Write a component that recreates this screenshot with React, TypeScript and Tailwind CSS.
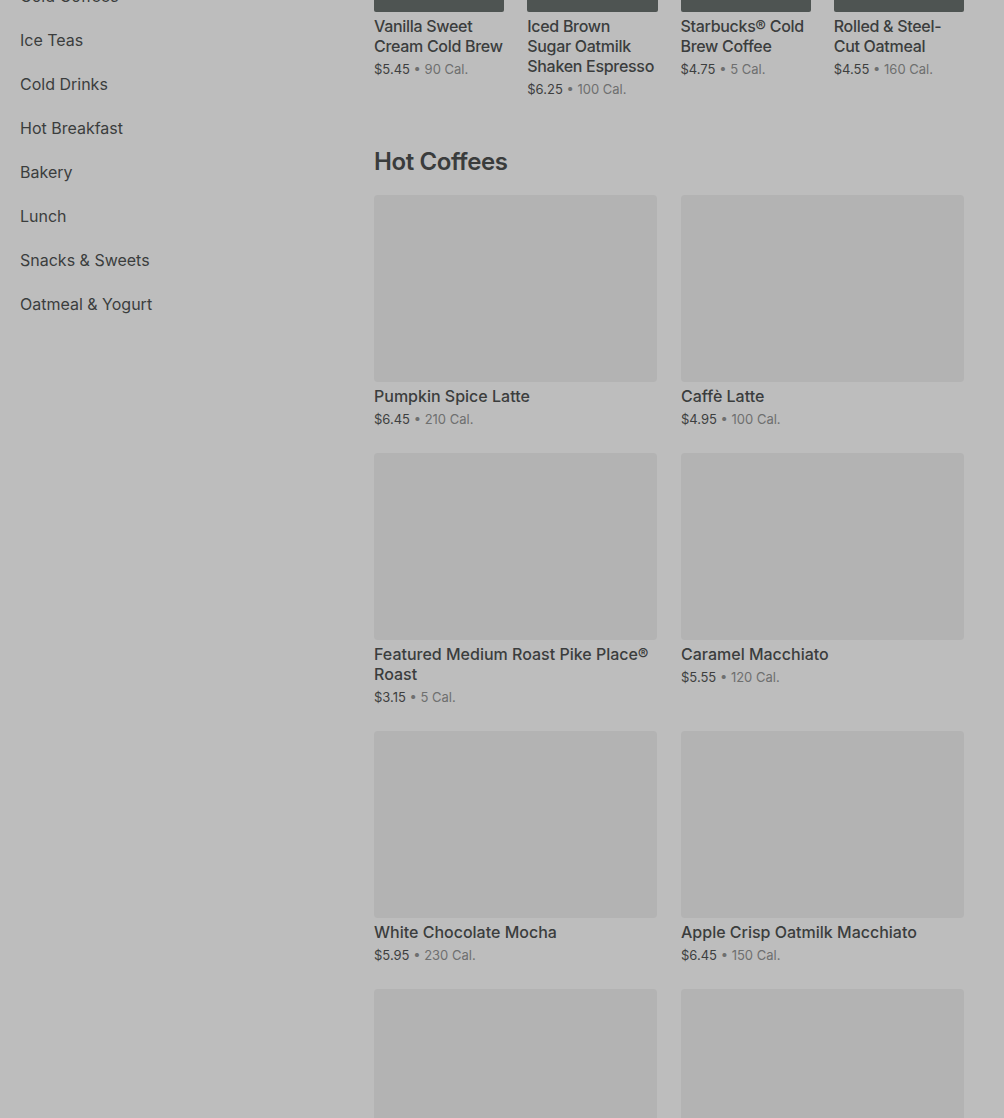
// Menu page under a dimmed overlay: sidebar categories + product grids.
const CATEGORIES = [
  "Cold Coffees",
  "Ice Teas",
  "Cold Drinks",
  "Hot Breakfast",
  "Bakery",
  "Lunch",
  "Snacks & Sweets",
  "Oatmeal & Yogurt",
];

type Item = { name: string; price: string; cal: string };

const FEATURED: Item[] = [
  { name: "Vanilla Sweet Cream Cold Brew", price: "$5.45", cal: "90 Cal." },
  { name: "Iced Brown Sugar Oatmilk Shaken Espresso", price: "$6.25", cal: "100 Cal." },
  { name: "Starbucks® Cold Brew Coffee", price: "$4.75", cal: "5 Cal." },
  { name: "Rolled & Steel-Cut Oatmeal", price: "$4.55", cal: "160 Cal." },
];

const HOT_COFFEES: Item[] = [
  { name: "Pumpkin Spice Latte", price: "$6.45", cal: "210 Cal." },
  { name: "Caffè Latte", price: "$4.95", cal: "100 Cal." },
  { name: "Featured Medium Roast Pike Place® Roast", price: "$3.15", cal: "5 Cal." },
  { name: "Caramel Macchiato", price: "$5.55", cal: "120 Cal." },
  { name: "White Chocolate Mocha", price: "$5.95", cal: "230 Cal." },
  { name: "Apple Crisp Oatmilk Macchiato", price: "$6.45", cal: "150 Cal." },
];

function Meta({ item }: { item: Item }) {
  return (
    <p className="mt-[3px] text-[13px] leading-5 text-[#3d3f3f]">
      {item.price}
      <span className="text-[#6e6f6f]"> • {item.cal}</span>
    </p>
  );
}

function FeaturedCard({ item }: { item: Item }) {
  return (
    <div>
      <div className="h-[130px] rounded-b-[2px] bg-[#4e5452]" />
      <p className="mt-1 text-base font-medium leading-5 tracking-[-0.3px] text-[#3b3d3d]">{item.name}</p>
      <Meta item={item} />
    </div>
  );
}

function ProductCard({ item }: { item: Item }) {
  return (
    <div>
      <div className="h-[187px] rounded-sm bg-[#b3b3b3]" />
      <p className="mt-1 text-base font-medium leading-5 text-[#3b3d3d]">{item.name}</p>
      <Meta item={item} />
    </div>
  );
}

export default function App() {
  return (
    <div
      className="h-[1118px] overflow-hidden bg-[#bdbdbd]"
      style={{ fontFamily: "Inter, 'Liberation Sans', sans-serif" }}
    >
      <div className="-mt-[120px] flex items-start">
        <nav className="w-[374px] shrink-0 pl-5 pt-[94px]">
          {CATEGORIES.map((c) => (
            <p key={c} className="py-[10px] text-base leading-6 text-[#3b3d3d]">
              {c}
            </p>
          ))}
        </nav>

        <main className="w-[590px] shrink-0 pt-[2px]">
          <div className="grid grid-cols-4 gap-x-[23px]">
            {FEATURED.map((it) => (
              <FeaturedCard key={it.name} item={it} />
            ))}
          </div>

          <h2 className="mt-[47px] mb-[17px] text-2xl font-semibold leading-8 tracking-[-0.4px] text-[#3a3c3c]">
            Hot Coffees
          </h2>

          <div className="grid grid-cols-2 gap-x-6 gap-y-6">
            {HOT_COFFEES.map((it) => (
              <ProductCard key={it.name} item={it} />
            ))}
            <div className="h-[187px] rounded-sm bg-[#b3b3b3]" />
            <div className="h-[187px] rounded-sm bg-[#b3b3b3]" />
          </div>
        </main>
      </div>
    </div>
  );
}
